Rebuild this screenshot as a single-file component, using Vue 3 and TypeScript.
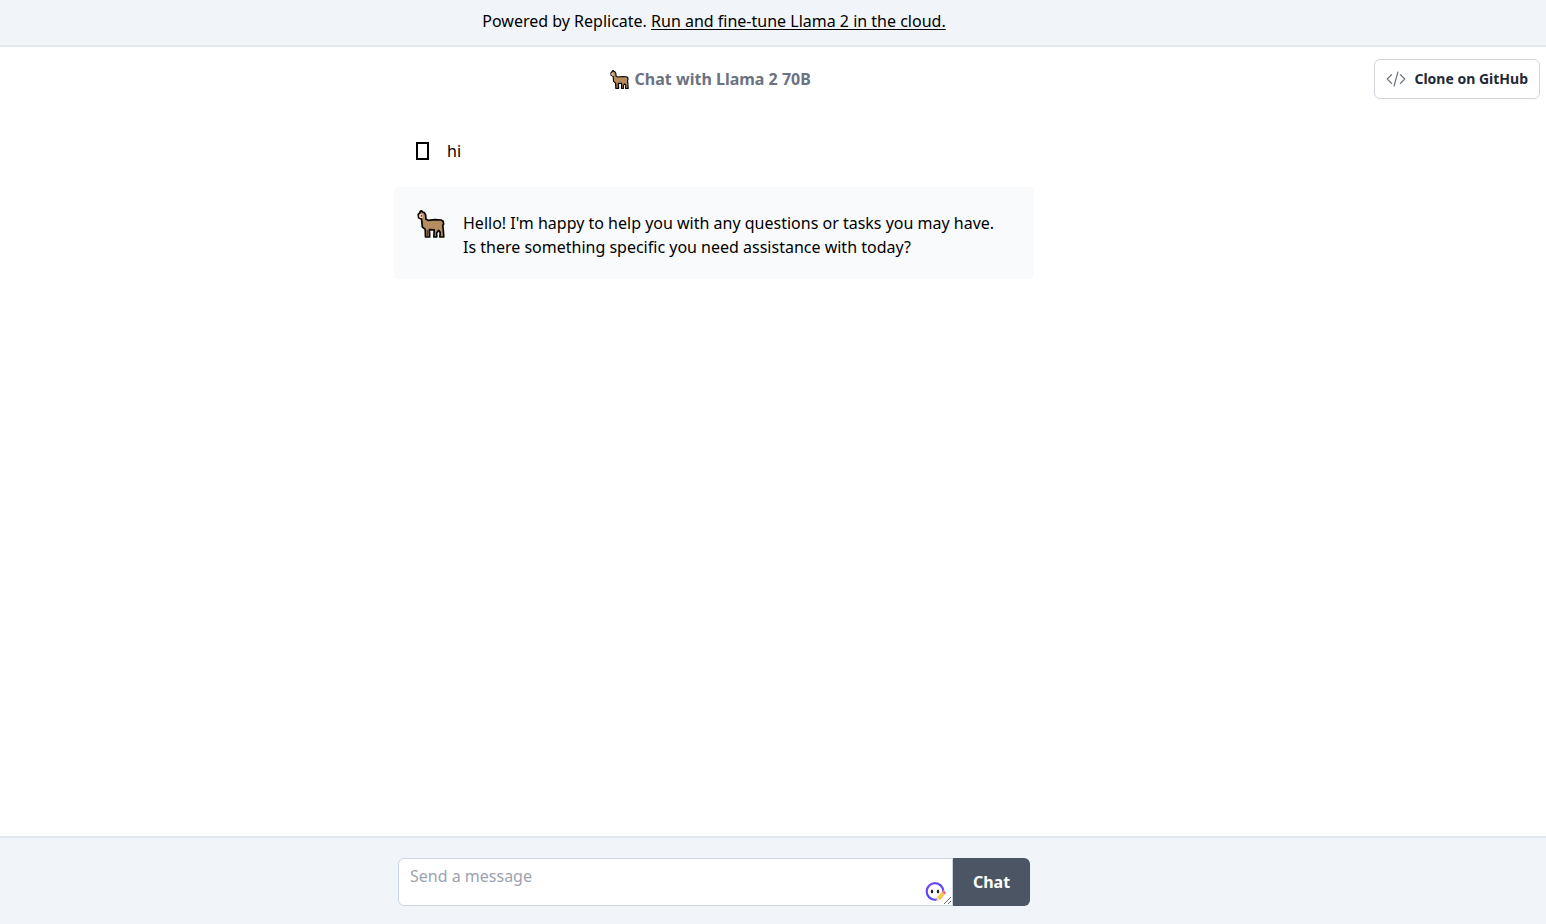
<script setup lang="ts">
import { ref } from 'vue'

interface Message {
  role: 'user' | 'assistant'
  text: string
}

const messages = ref<Message[]>([
  { role: 'user', text: 'hi' },
  {
    role: 'assistant',
    text: "Hello! I'm happy to help you with any questions or tasks you may have. Is there something specific you need assistance with today?",
  },
])

const draft = ref('')

function send() {
  const text = draft.value.trim()
  if (!text) return
  messages.value.push({ role: 'user', text })
  draft.value = ''
}
</script>

<template>
  <div class="page">
    <svg class="defs" aria-hidden="true">
      <symbol id="llama" viewBox="0 0 28 28">
        <path
          d="M1.2 4.4 2.6 3.2 3.5 1.2 4.8.9 5.6 2 7.2 2.5 8.6 4.8 9 9.3 11.2 10.3 18 9.6 24 10 26.2 11.2 26.6 14 25.8 15.5 26.3 20 26.8 27H22.9L23.2 22.4 21.6 20.4 19.6 23 19.8 27H16.9L17.2 19.8 12.4 19.6 12.7 27H8.5L8.2 19.4 5.3 16.8 4.6 9.3 1.7 7.8Z"
          fill="#b58b60"
          stroke="#080604"
          stroke-width="1.7"
          stroke-linejoin="round"
        />
        <path d="M2.2 4.5 4.5 3.7 6.2 5 5.8 7.6 3.8 8.3 2.1 7.2Z" fill="#efcdb0" />
        <path d="M4 5.2h1.2v1.2H4z" fill="#1b120b" />
        <path d="M10.3 20v6" fill="none" stroke="#3a2715" stroke-width="1" />
      </symbol>
    </svg>

    <div class="banner">
      <p>Powered by Replicate. <a href="#llama-2">Run and fine-tune Llama 2 in the cloud.</a></p>
    </div>

    <header class="topbar">
      <span class="lead"></span>
      <h1>
        <svg class="title-icon" aria-hidden="true"><use href="#llama" /></svg>
        <span>Chat with Llama 2 70B</span>
      </h1>
      <a class="clone" href="#github">
        <svg viewBox="0 0 24 24" aria-hidden="true">
          <path d="M17.25 6.75 22.5 12l-5.25 5.25m-10.5 0L1.5 12l5.25-5.25m7.5-3-4.5 16.5" />
        </svg>
        <span>Clone on GitHub</span>
      </a>
    </header>

    <main class="thread">
      <article v-for="(message, i) in messages" :key="i" class="message" :class="message.role">
        <svg v-if="message.role === 'assistant'" class="avatar" role="img" aria-label="Llama">
          <use href="#llama" />
        </svg>
        <span v-else class="glyph" role="img" aria-label="You"></span>
        <p>{{ message.text }}</p>
      </article>
    </main>

    <footer class="composer">
      <form @submit.prevent="send">
        <div class="field">
          <textarea v-model="draft" rows="1" aria-label="Message" placeholder="Send a message"></textarea>
          <svg class="assistant-badge" viewBox="0 0 22 22" aria-hidden="true">
            <defs>
              <linearGradient id="ring" x1="0" y1="0" x2="1" y2="1">
                <stop offset="0" stop-color="#8b45f5" />
                <stop offset="0.45" stop-color="#5147f6" />
                <stop offset="1" stop-color="#8a5cf2" />
              </linearGradient>
            </defs>
            <circle cx="10" cy="10.5" r="8.3" fill="#fff" stroke="url(#ring)" stroke-width="2.2" />
            <ellipse cx="7" cy="10.5" rx="1.2" ry="1.9" fill="#222" />
            <ellipse cx="13" cy="10.5" rx="1.2" ry="1.9" fill="#222" />
            <path d="m11.5 20 .7-4 5-5.6 3 2.6-5.2 5.8Z" fill="#f7c748" />
            <path d="m16.8 10.8 1.6-1.7 3 2.6-1.6 1.7Z" fill="#ee7296" />
            <path d="m11.5 20 .7-4 2.9 2.7Z" fill="#f5dfa5" />
          </svg>
        </div>
        <button type="submit">Chat</button>
      </form>
    </footer>
  </div>
</template>

<style>
body {
  margin: 0;
}
</style>

<style scoped>
.page {
  --gutter: 118px;
  box-sizing: border-box;
  min-height: 100vh;
  display: flex;
  flex-direction: column;
  background: #fff;
  color: #000;
  font: 16px/24px 'Segoe UI', 'Noto Sans', 'Open Sans', sans-serif;
}

.page *,
.page *::before {
  box-sizing: border-box;
}

.defs {
  position: absolute;
  width: 0;
  height: 0;
}

p,
h1 {
  margin: 0;
}

.banner {
  padding: 9px var(--gutter) 12px 0;
  border-bottom: 2px solid #e2e5eb;
  background: #f1f5f9;
  text-align: center;
}

.banner a {
  color: inherit;
  text-decoration: underline;
  text-underline-offset: 2px;
}

.topbar {
  display: flex;
  align-items: center;
  justify-content: space-between;
  padding: 12px 6px;
}

.lead {
  width: 40px;
}

h1 {
  display: flex;
  align-items: center;
  gap: 6px;
  color: #6b7280;
  font-size: 16px;
  font-weight: 700;
}

.title-icon {
  width: 19px;
  height: 19px;
}

.clone {
  display: flex;
  align-items: center;
  gap: 8px;
  height: 40px;
  padding: 0 11px;
  border: 1px solid #d1d5db;
  border-radius: 6px;
  background: #fff;
  color: #1f2937;
  font-size: 14px;
  font-weight: 700;
  text-decoration: none;
}

.clone svg {
  width: 20px;
  height: 20px;
  fill: none;
  stroke: #6b7280;
  stroke-width: 1.5;
  stroke-linecap: round;
  stroke-linejoin: round;
}

.thread {
  flex: 1;
  display: flex;
  flex-direction: column;
  align-items: center;
  gap: 24px;
  padding: 28px var(--gutter) 28px 0;
}

.message {
  display: flex;
  width: 100%;
  max-width: 640px;
  border-radius: 4px;
}

.message.user {
  gap: 18px;
  padding: 0 22px;
}

.message.assistant {
  gap: 18px;
  padding: 24px 28px 20px 23px;
  background: #f9fafb;
}

.message.assistant .avatar {
  margin-top: -1px;
}

.glyph {
  width: 13px;
  height: 18px;
  margin-top: 3px;
  border: 2px solid #000;
}

.avatar {
  flex: none;
  width: 28px;
  height: 28px;
}

.composer {
  padding: 20px var(--gutter) 18px 0;
  border-top: 2px solid #e2e8f0;
  background: #f1f5f9;
}

form {
  display: flex;
  max-width: 632px;
  margin: 0 auto;
}

.field {
  position: relative;
  flex: 1;
}

textarea {
  display: block;
  width: 100%;
  height: 48px;
  padding: 5px 11px;
  border: 1px solid #cbd5e1;
  border-radius: 6px 0 0 6px;
  background: #fff;
  color: #111827;
  font: inherit;
  resize: vertical;
  outline: none;
}

textarea::placeholder {
  color: #9ca3af;
  opacity: 1;
}

.assistant-badge {
  position: absolute;
  right: 6px;
  bottom: 3px;
  width: 22px;
  height: 22px;
  pointer-events: none;
}

button {
  width: 77px;
  border: 0;
  border-radius: 0 6px 6px 0;
  background: #4b5563;
  color: #fff;
  font: inherit;
  font-weight: 700;
  cursor: pointer;
}
</style>
